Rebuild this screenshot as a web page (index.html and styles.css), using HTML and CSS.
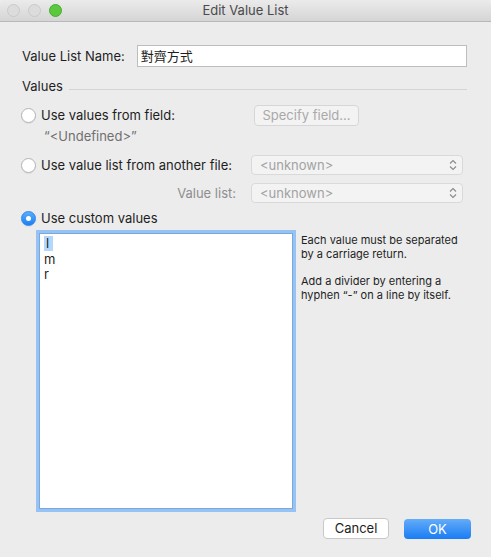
FILE: index.html
```html
<!DOCTYPE html>
<html lang="zh-Hant">
<head>
    <meta charset="UTF-8">
    <title>Edit Value List</title>
    <link rel="stylesheet" href="styles.css">
</head>
<body>

<div class="window">
    <div class="titlebar">
        <div class="lights">
            <span class="light"></span>
            <span class="light"></span>
            <span class="light green"></span>
        </div>
        <div class="title">Edit Value List</div>
    </div>

    <div class="content">
        <div class="row name-row">
            <label class="name-label">Value List Name:</label>
            <div class="text-input">對齊方式</div>
        </div>

        <div class="row group-row">
            <span class="group-label">Values</span>
            <div class="group-line"></div>
        </div>

        <div class="row radio-row r1">
            <div class="radio-wrap">
                <span class="radio"></span>
                <span>Use values from field:</span>
            </div>
            <div class="btn disabled specify">Specify field...</div>
        </div>

        <div class="row undefined-row">“&lt;Undefined&gt;”</div>

        <div class="row radio-row r2">
            <div class="radio-wrap">
                <span class="radio"></span>
                <span>Use value list from another file:</span>
            </div>
            <div class="popup">
                <span>&lt;unknown&gt;</span>
                <svg class="chev" width="8" height="12" viewBox="0 0 8 12"><path d="M1 4.5 L4 1.5 L7 4.5 M1 7.5 L4 10.5 L7 7.5" fill="none" stroke="#8a8a8a" stroke-width="1.1"/></svg>
            </div>
        </div>

        <div class="row list-row">
            <span class="list-label">Value list:</span>
            <div class="popup">
                <span>&lt;unknown&gt;</span>
                <svg class="chev" width="8" height="12" viewBox="0 0 8 12"><path d="M1 4.5 L4 1.5 L7 4.5 M1 7.5 L4 10.5 L7 7.5" fill="none" stroke="#8a8a8a" stroke-width="1.1"/></svg>
            </div>
        </div>

        <div class="row radio-row r3">
            <div class="radio-wrap">
                <span class="radio on"></span>
                <span class="custom-label">Use custom values</span>
            </div>
        </div>

        <div class="row values-row">
            <div class="values-box">
                <div class="line"><span class="sel">l</span></div>
                <div class="line">m</div>
                <div class="line">r</div>
            </div>
            <div class="help">
                <p>Each value must be separated<br>by a carriage return.</p>
                <p>Add a divider by entering a<br>hyphen “-” on a line by itself.</p>
            </div>
        </div>

        <div class="row buttons-row">
            <div class="btn cancel">Cancel</div>
            <div class="btn ok">OK</div>
        </div>
    </div>
</div>

</body>
</html>
```

FILE: styles.css
```css
html, body { margin: 0; padding: 0; background: #ececec; }
body { font-family: Inter, "Liberation Sans", "Noto Sans CJK TC", sans-serif; font-size: 13px; color: #1e1e1e; }

.window { width: 491px; height: 557px; background: #ececec; border-radius: 5px 5px 4px 4px; overflow: hidden; }

/* title bar */
.titlebar { height: 21px; border-bottom: 1px solid #b8b8b8; background: linear-gradient(#ebebeb, #d5d5d5); display: flex; align-items: center; position: relative; }
.lights { display: flex; gap: 8px; padding-left: 7px; }
.light { width: 11px; height: 11px; border-radius: 50%; background: #dcdcdc; border: 1px solid #c9c9c9; }
.light.green { background: #5cc83f; border-color: #46ad2d; }
.title { position: absolute; left: 0; right: 0; text-align: center; color: #4a4a4a; font-size: 13px; line-height: 21px; }

.content { padding: 0 24px 0 21px; }
.row { display: flex; align-items: center; }

.name-row { margin-top: 23px; height: 22px; }
.name-label { width: 115px; padding-left: 1px; }
.text-input { width: 326px; height: 20px; border: 1px solid #bdbdbd; background: #fff; line-height: 20px; padding-left: 3px; font-size: 13px; font-family: "Noto Sans CJK TC", sans-serif; }

.group-row { margin-top: 11px; height: 16px; align-items: flex-start; }
.group-label { padding-left: 1px; line-height: 16px; }
.group-line { flex: 1; height: 1px; background: #d4d4d4; margin: 11px 0 0 6px; }

.radio-row { height: 20px; }
.r1 { margin-top: 11px; }
.r2 { margin-top: 11px; }
.r3 { margin-top: 7px; height: 16px; }
.radio-wrap { display: flex; align-items: center; width: 233px; }
.r2 .radio-wrap { width: 230px; }
.radio { width: 13px; height: 13px; border-radius: 50%; border: 1px solid #b3b3b3; background: #fff; margin-right: 5px; box-shadow: 0 1px 1px rgba(0,0,0,0.06); position: relative; }
.radio.on { background: linear-gradient(#5aaef8, #1d7ff3); border-color: #2a84ef; }
.radio.on::after { content: ""; position: absolute; left: 4px; top: 4px; width: 5px; height: 5px; border-radius: 50%; background: #fff; }

.btn { height: 19px; border-radius: 4px; text-align: center; line-height: 19px; font-size: 13px; }
.btn.disabled { background: #f3f3f3; border: 1px solid #d6d6d6; color: #a9a9a9; }
.specify { width: 103px; }

.undefined-row { margin-top: 3px; height: 16px; padding-left: 23px; color: #707070; }

.popup { width: 197px; height: 18px; border: 1px solid #d9d9d9; border-radius: 4px; background: #f3f3f3; color: #a2a2a2; display: flex; align-items: center; justify-content: space-between; padding: 0 5px 0 8px; }
.chev { display: block; }

.list-row { margin-top: 8px; height: 20px; }
.list-label { width: 215px; text-align: right; color: #8e8e8e; margin-right: 15px; }

.values-row { margin-top: 7px; align-items: flex-start; }
.values-box { width: 252px; height: 273px; margin-left: 18px; background: #fff; border: 1px solid #79a8de; box-shadow: 0 0 0 3px #96c3f4; padding: 1px 0 0 0; box-sizing: content-box; }
.line { height: 15.5px; line-height: 16px; padding-left: 4px; }
.sel { display: inline-block; background: #b3d7fd; padding: 0 4px 0 2px; line-height: 15px; }

.help { margin-left: 8px; font-size: 11px; line-height: 13.5px; padding-top: 1px; }
.help p { margin: 0 0 14px 0; }

.buttons-row { margin-top: 9px; justify-content: flex-end; gap: 15px; margin-right: -4px; }
.cancel { width: 64px; background: #fff; border: 1px solid #c8c8c8; }
.ok { width: 67px; height: 20px; line-height: 20px; background: linear-gradient(#63acf8, #1a7cf4); color: #fff; }
```
